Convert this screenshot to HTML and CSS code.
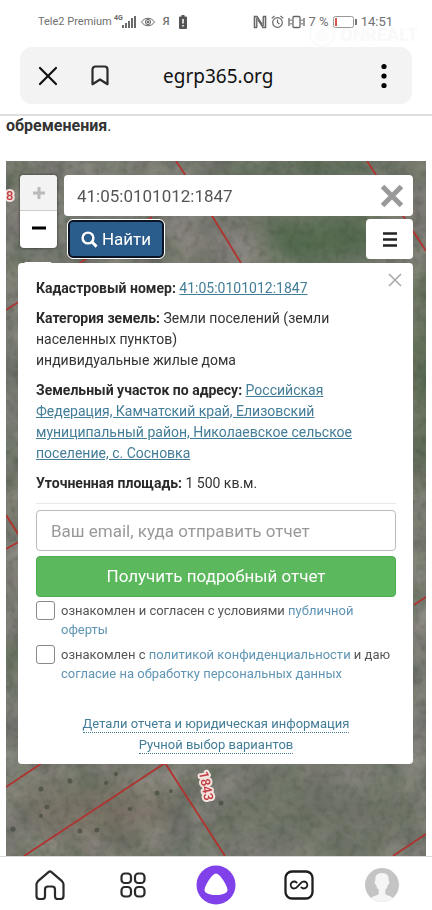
FILE: index.html
```html
<!DOCTYPE html>
<html lang="ru">
<head>
<meta charset="utf-8">
<meta name="viewport" content="width=device-width, initial-scale=1">
<title>egrp365.org</title>
<link rel="stylesheet" href="styles.css">
</head>
<body>
<header class="top">
  <div class="status">
    <div class="status-group">
      <span class="carrier">Tele2 Premium</span>
      <svg width="23" height="16" viewBox="0 0 23 16" fill="#6a6a6a"><text class="net" x="0" y="6">4G</text><rect x="8" y="11" width="2" height="3"/><rect x="11" y="9" width="2" height="5"/><rect x="14" y="7" width="2" height="7"/><rect x="17" y="4" width="2" height="10"/><rect x="20" y="2" width="2" height="12"/></svg>
      <svg class="eye" width="14" height="12" viewBox="0 0 14 12" fill="none" stroke="#666"><path d="M.6 6C3.500 1 10.500 1 13.400 6C10.500 11 3.500 11 .6 6Z"/><circle cx="7" cy="6" r="2.600"/><circle cx="7" cy="6" r="1" fill="#666"/></svg>
      <span class="ya">Я</span>
      <svg class="lowbat" width="8" height="14" viewBox="0 0 8 14"><path d="M2.500 0h3v1.500H7a1 1 0 0 1 1 1V13a1 1 0 0 1-1 1H1a1 1 0 0 1-1-1V2.500a1 1 0 0 1 1-1h1.500Z" fill="#555"/><path d="M4 4v4.500M4 10v1.500" stroke="#fff" stroke-width="1.500"/></svg>
    </div>
    <div class="status-group">
      <svg width="14" height="14" viewBox="0 0 14 14"><path d="M4 12.500H1.500v-11H4l5 8M10 1.500h2.500v11H10l-5-8" fill="none" stroke="#666" stroke-width="1.600"/><path d="M3.800 12.500V3M10.200 1.500V11" stroke="#666" stroke-width="1.400"/></svg>
      <svg width="13" height="14" viewBox="0 0 13 14" fill="none" stroke="#666" stroke-width="1.200"><circle cx="6.500" cy="7.500" r="4.800"/><path d="M6.500 4.500v3l2 1.500M.7 3.400 3.500 1M12.300 3.400 9.500 1"/></svg>
      <svg width="17" height="14" viewBox="0 0 17 14" fill="none" stroke="#666" stroke-width="1.300"><rect x="5" y="1.500" width="7" height="11" rx="1"/><path d="M1 3v8M3 4.500v1.500M3 8v1.500M16 3v8M14 4.500v1.500M14 8v1.500"/></svg>
      <span class="percent">7 %</span>
      <svg class="bat" width="24" height="12" viewBox="0 0 24 12"><rect x=".5" y=".5" width="20" height="11" rx="2" fill="#fff" stroke="#999"/><rect x="2" y="2" width="2" height="8" fill="#d9544f"/><rect x="22" y="3" width="2" height="6" fill="#777"/></svg>
      <time class="clock">14:51</time>
    </div>
    <div class="watermark"><svg width="28" height="26" viewBox="0 0 28 26"><circle cx="14" cy="13" r="12" fill="none" stroke="#fafafa" stroke-width="2"/><path d="m7 13 7-6 7 6v7H7Z" fill="#fcfcfc"/></svg><span>ONREALT</span></div>
  </div>
  <div class="address">
    <button class="icon-btn" aria-label="Закрыть"><svg width="20" height="20" viewBox="0 0 20 20" fill="none" stroke="#111" stroke-width="2.200" stroke-linecap="round"><path d="m2 2 16 16M18 2 2 18"/></svg></button>
    <button class="icon-btn mark" aria-label="Закладка"><svg width="18" height="21" viewBox="0 0 18 21" fill="none" stroke="#2b2b2b" stroke-width="2.200" stroke-linejoin="round"><path d="M1.500 4.500a3 3 0 0 1 3-3h9a3 3 0 0 1 3 3v14.700L9 14.500 1.500 19.200Z"/></svg></button>
    <span class="host">egrp365.org</span>
    <button class="icon-btn" aria-label="Меню"><svg width="6" height="26" viewBox="0 0 6 26"><circle cx="3" cy="3.500" r="2.600"/><circle cx="3" cy="13" r="2.600"/><circle cx="3" cy="22.500" r="2.600"/></svg></button>
  </div>
</header>

<main class="page">
  <p class="lead"><b>обременения</b>.</p>
  <section class="map">
    <svg class="ground" viewBox="6 161 420 695" preserveAspectRatio="xMidYMin slice" aria-hidden="true">
      <defs>
        <filter id="coarse" x="0" y="0" width="100%" height="100%" color-interpolation-filters="sRGB"><feTurbulence type="fractalNoise" baseFrequency=".03" numOctaves="4" seed="8"/><feColorMatrix values=".24 0 0 0 .36  .18 .06 0 0 .365  .2 0 .04 0 .33  0 0 0 0 1"/></filter>
        <filter id="fine" x="0" y="0" width="100%" height="100%" color-interpolation-filters="sRGB"><feTurbulence type="fractalNoise" baseFrequency=".14" numOctaves="2" seed="3"/><feColorMatrix values="0 0 0 0 .2  0 0 0 0 .24  0 0 0 0 .18  2 0 0 0 -.9"/></filter>
        <filter id="soft" x="-50%" y="-50%" width="200%" height="200%"><feGaussianBlur stdDeviation="12"/></filter>
      </defs>
      <rect x="6" y="161" width="420" height="695" filter="url(#coarse)"/>
      <g filter="url(#soft)">
        <ellipse cx="325" cy="238" rx="65" ry="28" fill="#4c6848" opacity=".8"/>
        <ellipse cx="310" cy="166" rx="100" ry="9" fill="#486344" opacity=".8"/>
        <ellipse cx="426" cy="370" rx="14" ry="110" fill="#48633f" opacity=".7"/>
        <ellipse cx="215" cy="240" rx="40" ry="22" fill="#85807a" opacity=".5"/>
        <ellipse cx="100" cy="810" rx="80" ry="30" fill="#77695b" opacity=".4"/>
        <ellipse cx="320" cy="815" rx="110" ry="40" fill="#6a7063" opacity=".6"/>
      </g>
      <rect x="6" y="161" width="420" height="695" filter="url(#fine)" opacity=".25"/>
      <g fill="#3c4338" opacity=".6"><circle cx="41" cy="789" r="2.500"/><circle cx="70" cy="781" r="2.500"/><circle cx="47" cy="807" r="2.500"/><circle cx="41" cy="816" r="2"/><circle cx="80" cy="831" r="2.500"/><circle cx="97" cy="830" r="2.500"/><circle cx="13" cy="829" r="2.500"/><circle cx="106" cy="783" r="2"/><circle cx="157" cy="793" r="2.500"/><circle cx="171" cy="791" r="2"/><circle cx="130" cy="809" r="2"/><circle cx="221" cy="803" r="2.500"/><circle cx="116" cy="774" r="2"/></g>
      <g fill="none" stroke="#b0332f" stroke-width="1.800"><path d="m176 161 10 15 28 43 27 44M367 161l59 90M152 217 6 310M6 515l16 25L6 549M414 605l12-8M6 787l36-24M24 856l141-93 60 93M393 856l33-22"/></g>
      <g class="plot"><text x="6" y="200">8</text><text x="191" y="792" transform="rotate(79 207 787)">1843</text></g>
    </svg>

    <div class="tools">
      <div class="zoom">
        <button class="zoom-in" aria-label="Приблизить"><svg width="14" height="14" viewBox="0 0 14 14"><path d="M7 1v12M1 7h12" stroke="#bababa" stroke-width="3"/></svg></button>
        <button class="zoom-out" aria-label="Отдалить"><svg width="14" height="14" viewBox="0 0 14 14"><path d="M0 6h14" stroke="#000" stroke-width="3"/></svg></button>
      </div>
      <form class="search">
        <div class="field">
          <input type="text" aria-label="Кадастровый номер" value="41:05:0101012:1847">
          <button type="button" class="clear" aria-label="Очистить"><svg width="24" height="24" viewBox="0 0 24 24"><path d="m2.500 2.500 19 19M21.500 2.500l-19 19" stroke="#999" stroke-width="5"/></svg></button>
        </div>
        <div class="actions">
          <button type="button" class="find"><svg width="17" height="17" viewBox="0 0 17 17" fill="none" stroke="#fff" stroke-width="2.400"><circle cx="7" cy="7" r="5.400"/><path d="m11 11 4.600 4.600" stroke-width="3"/></svg>Найти</button>
          <button type="button" class="layers" aria-label="Слои"><svg width="14" height="15" viewBox="0 0 14 15"><path d="M0 1.500h14M0 7.500h14M0 13.500h14" stroke="#222" stroke-width="2.400"/></svg></button>
        </div>
      </form>
    </div>

    <article class="card">
      <button class="close" aria-label="Закрыть"><svg width="14" height="14" viewBox="0 0 14 14"><path d="m1 1 12 12M13 1 1 13" stroke="#aaa" stroke-width="1.600"/></svg></button>
      <p><b>Кадастровый номер:</b> <a href="#">41:05:0101012:1847</a></p>
      <p><b>Категория земель:</b> Земли поселений (земли населенных пунктов)<br>индивидуальные жилые дома</p>
      <p><b>Земельный участок по адресу:</b> <a href="#">Российская Федерация, Камчатский край, Елизовский муниципальный район, Николаевское сельское поселение, с. Сосновка</a></p>
      <p><b>Уточненная площадь:</b> 1 500 кв.м.</p>
      <hr>
      <form class="order">
        <input class="email" type="email" aria-label="Email" placeholder="Ваш email, куда отправить отчет">
        <button type="button" class="submit">Получить подробный отчет</button>
        <div class="agree"><input type="checkbox" id="offer"><label for="offer">ознакомлен и согласен с условиями <a href="#">публичной оферты</a></label></div>
        <div class="agree"><input type="checkbox" id="policy"><label for="policy">ознакомлен с <a href="#">политикой конфиденциальности</a> и даю <a href="#">согласие на обработку персональных данных</a></label></div>
      </form>
      <div class="more"><a href="#">Детали отчета и юридическая информация</a><br><a href="#">Ручной выбор вариантов</a></div>
    </article>
  </section>
</main>

<nav class="tabs">
  <a href="#" aria-label="Главная"><svg width="30" height="30" viewBox="0 0 30 30" fill="none" stroke="#2a2a2a" stroke-width="2.200" stroke-linejoin="round"><path d="M13.500 2.100Q15 .8 16.500 2.100L27 11.200Q28.500 12.600 28.500 14.500V26Q28.500 29 25.500 29H22.500Q20 29 20 26.500V19.500Q20 16.500 17 16.500H13Q10 16.500 10 19.500V26.500Q10 29 7.500 29H4.500Q1.500 29 1.500 26V14.500Q1.500 12.600 3 11.200Z"/></svg></a>
  <a href="#" aria-label="Сервисы"><svg width="26" height="26" viewBox="0 0 26 26" fill="none" stroke="#2a2a2a" stroke-width="2.200"><rect x="1.500" y="1.500" width="9.500" height="9.500" rx="3.300"/><rect x="15" y="1.500" width="9.500" height="9.500" rx="3.300"/><rect x="1.500" y="15" width="9.500" height="9.500" rx="3.300"/><rect x="15" y="15" width="9.500" height="9.500" rx="3.300"/></svg></a>
  <a href="#" aria-label="Алиса"><svg width="40" height="40" viewBox="0 0 40 40"><circle cx="20" cy="20" r="19.500" fill="#8040ea"/><path d="M20 8.500C24 8.500 31.500 21 31.500 25C31.500 28.500 26 30 20 30S8.500 28.500 8.500 25C8.500 21 16 8.500 20 8.500Z" fill="#fff"/></svg></a>
  <a href="#" aria-label="Вкладки"><svg width="30" height="30" viewBox="0 0 30 30" fill="none" stroke="#1e1e1e"><rect x="1.500" y="1.500" width="27" height="27" rx="6.500" stroke-width="2.300"/><path d="M12.700 12.600A3.500 3.500 0 1 0 13 17L17 13A3.500 3.500 0 1 1 17.300 17.400" stroke-width="1.800" stroke-linecap="round"/></svg></a>
  <a href="#" aria-label="Профиль"><svg width="34" height="34" viewBox="0 0 34 34"><defs><clipPath id="disc"><circle cx="17" cy="17" r="17"/></clipPath></defs><g clip-path="url(#disc)"><path fill="#c4c4c4" d="M0 0h34v34H0z"/><path fill="#f5f5f5" d="M17 5c-5 0-7.300 3-6.600 7.500-1.200 0-.8 3.800.7 4.300.5 2.700 1.600 4 2.600 5.200v4C12 28 5 27.500 4 34h26c-1-6.500-8-6-9.700-8v-4c1-1.200 2.100-2.500 2.600-5.200 1.500-.5 1.900-4.300.7-4.300C24.300 8 22 5 17 5Z"/></g></svg></a>
</nav>
</body>
</html>
```
FILE: styles.css
```css
* {
  box-sizing: border-box;
}

body {
  margin: 0;
  min-height: 100vh;
  display: flex;
  flex-direction: column;
  background: #fff;
  color: #333;
  font: 14px/21px Roboto, "Noto Sans", sans-serif;
}

button {
  margin: 0;
  padding: 0;
  border: 0;
  background: none;
  font: inherit;
  display: flex;
  align-items: center;
  justify-content: center;
}

svg {
  display: block;
  flex: none;
}

.top {
  padding: 0 20px 10px;
  border-bottom: 2px solid #dedede;
}

.status {
  position: relative;
  height: 47px;
  padding: 0 19px 4px 18px;
  display: flex;
  align-items: center;
  justify-content: space-between;
  color: #707070;
  font-size: 11px;
}

.status-group {
  display: flex;
  align-items: center;
  gap: 4px;
}

.carrier {
  margin-right: -2px;
}

.net {
  font-size: 7px;
  font-weight: 700;
}

.ya {
  margin: 0 6px 0 4px;
  font-weight: 500;
}

.percent {
  font-size: 13px;
}

.clock {
  font-size: 13px;
}

.watermark {
  position: absolute;
  right: -6px;
  top: 21px;
  display: flex;
  align-items: center;
  gap: 4px;
  color: #f9f9f9;
  font-size: 18px;
  font-weight: 700;
  z-index: -1;
}

.address {
  height: 57px;
  padding: 0 25px 0 18px;
  display: flex;
  align-items: center;
  background: #f3f3f3;
  border-radius: 12px;
}

.mark {
  margin-left: 33px;
}

.host {
  flex: 1;
  padding-left: 54px;
  color: #111;
  font: 19px/24px "Noto Sans", sans-serif;
}

.page {
  flex: 1;
  display: flex;
  flex-direction: column;
  padding: 0 6px;
}

.lead {
  margin: 0 0 26px;
  font-size: 16px;
  line-height: 19px;
}

.map {
  position: relative;
  flex: 1;
  padding: 14px 13px 92px 12px;
  background: #74756b;
}

.ground {
  position: absolute;
  left: 0;
  top: 0;
  width: 100%;
  height: 100%;
}

.plot {
  fill: #c23b40;
  stroke: #f3e3df;
  stroke-width: 4px;
  stroke-linejoin: round;
  paint-order: stroke;
  font-size: 13px;
  font-weight: 500;
}

.tools {
  position: relative;
  display: flex;
  gap: 7px;
  padding-left: 2px;
}

.zoom {
  width: 37px;
  height: 73px;
  border-radius: 4px;
  overflow: hidden;
  background: #fff;
  box-shadow: 0 0 3px rgba(0, 0, 0, .6);
}

.zoom-in,
.zoom-out {
  width: 100%;
  height: 36px;
}

.zoom-in {
  background: #f3f3f3;
  border-bottom: 1px solid #ccc;
}

.search {
  flex: 1;
  min-width: 0;
}

.field {
  display: flex;
  align-items: center;
  height: 41px;
  padding: 0 9px 0 13px;
  background: #fff;
  border-radius: 4px;
}

.field input {
  flex: 1;
  min-width: 0;
  padding: 0;
  border: 0;
  outline: 0;
  background: none;
  color: #555;
  font: 17px/24px Roboto, sans-serif;
}

.actions {
  display: flex;
  align-items: center;
  justify-content: space-between;
  margin-top: 3px;
  padding-left: 4px;
}

.find {
  width: 96px;
  height: 38px;
  gap: 4px;
  border: 2px solid #0a1424;
  outline: 1px solid #fff;
  border-radius: 5px;
  background: #2b5d8c;
  color: #fff;
  font-size: 17px;
}

.layers {
  width: 47px;
  height: 40px;
  border-radius: 4px;
  background: #fff;
}

.card {
  position: relative;
  margin-top: 4px;
  padding: 15px 17px 9px 18px;
  background: #fff;
  border-radius: 4px;
}

.card::before {
  content: "";
  position: absolute;
  left: 6px;
  top: -1px;
  width: 28px;
  height: 4px;
  border-radius: 2px;
  background: #fff;
}

.card p {
  margin: 0 0 9px;
}

.card b {
  color: #2a2a2a;
}

.card a {
  color: #437d98;
}

.close {
  position: absolute;
  right: 11px;
  top: 10px;
}

.card hr {
  margin: 0 0 6px;
  border: 0;
  border-top: 1px solid #e8e8e8;
}

.email {
  display: block;
  width: 100%;
  height: 41px;
  padding: 0 14px;
  border: 1px solid #bbb;
  border-radius: 4px;
  font: 17px/24px Roboto, sans-serif;
}

.email::placeholder {
  color: #999;
}

.submit {
  width: 100%;
  height: 41px;
  margin: 5px 0 4px;
  border-radius: 4px;
  background: #5cb85c;
  border: 1px solid #4eab4e;
  color: #fff;
  font-size: 17px;
}

.agree {
  display: flex;
  gap: 6px;
  margin-bottom: 6px;
  color: #555;
  font-size: 13px;
  line-height: 19px;
}

.agree input {
  appearance: none;
  flex: none;
  width: 19px;
  height: 19px;
  margin: 0;
  border: 1px solid #888;
  border-radius: 3px;
  background: #fff;
}

.agree label {
  flex: 1;
}

.agree a {
  color: #5f95b4;
  text-decoration: none;
}

.more {
  margin-top: 30px;
  text-align: center;
  font-size: 13px;
}

.more a {
  padding-bottom: 1px;
  text-decoration: none;
  border-bottom: 1px dotted #437d98;
}

.tabs {
  height: 54px;
  padding: 2px 9px 0;
  display: grid;
  grid-template-columns: repeat(5, 1fr);
  place-items: center;
  border-top: 1px solid #d8d8d8;
}
```
